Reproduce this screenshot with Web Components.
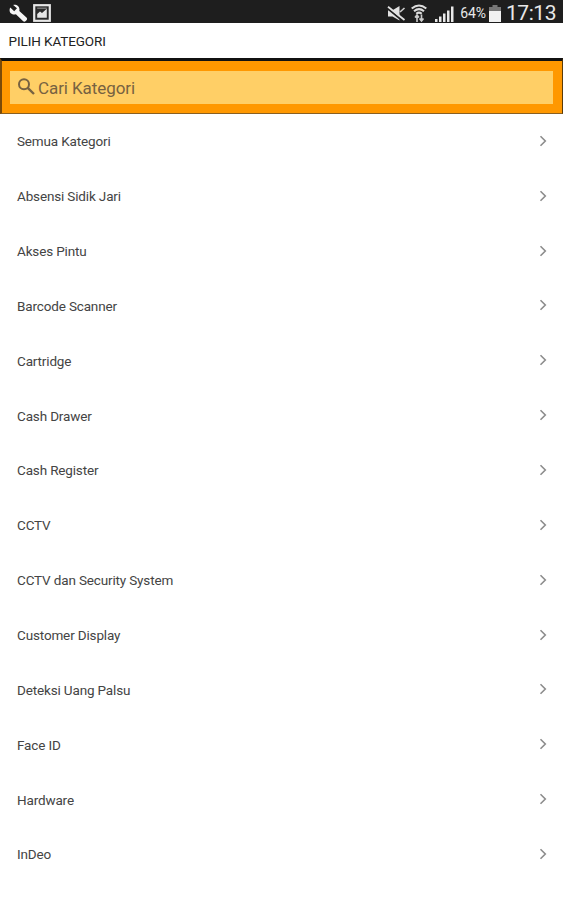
<!DOCTYPE html>
<html lang="id">
<head>
<meta charset="utf-8">
<title>Pilih Kategori</title>
<style>
  body {
    margin: 0;
    background: #fff;
    font-family: Roboto, "Liberation Sans", sans-serif;
  }
</style>
</head>
<body>
<category-page>
  <status-bar slot="status" battery="64%" time="17:13"></status-bar>
  <page-title slot="title">PILIH KATEGORI</page-title>
  <search-box slot="search">Cari Kategori</search-box>
  <category-row>Semua Kategori</category-row>
  <category-row>Absensi Sidik Jari</category-row>
  <category-row>Akses Pintu</category-row>
  <category-row>Barcode Scanner</category-row>
  <category-row>Cartridge</category-row>
  <category-row>Cash Drawer</category-row>
  <category-row>Cash Register</category-row>
  <category-row>CCTV</category-row>
  <category-row>CCTV dan Security System</category-row>
  <category-row>Customer Display</category-row>
  <category-row>Deteksi Uang Palsu</category-row>
  <category-row>Face ID</category-row>
  <category-row>Hardware</category-row>
  <category-row>InDeo</category-row>
</category-page>

<script>
/**
 * Page frame: status bar, title and search on top, category rows below
 */
class CategoryPage extends HTMLElement {
  constructor() {
    super();
    this.attachShadow({ mode: 'open' });
    this.shadowRoot.innerHTML = `
      <style>
        :host {
          display: flex;
          flex-direction: column;
          height: 900px;
          overflow: hidden;
        }

        .list {
          display: flex;
          flex-direction: column;
        }
      </style>
      <slot name="status"></slot>
      <slot name="title"></slot>
      <slot name="search"></slot>
      <div class="list"><slot></slot></div>
    `;
  }
}

/**
 * Android status bar with notification icons, battery level and clock
 */
class StatusBar extends HTMLElement {
  constructor() {
    super();
    this.attachShadow({ mode: 'open' });
  }

  connectedCallback() {
    this.shadowRoot.innerHTML = `
      <style>
        :host {
          display: flex;
          justify-content: space-between;
          box-sizing: border-box;
          flex: none;
          height: 23px;
          padding: 0 7px 0 9px;
          background: #1e1e1e;
          color: #e8e8e8;
        }

        .group {
          display: flex;
          align-items: center;
          height: 26px;
        }

        svg {
          display: block;
          flex: none;
        }

        .battery {
          font-size: 14px;
          letter-spacing: -0.1px;
          margin: 0 3px 0 6px;
        }

        .time {
          font-size: 21px;
          letter-spacing: -0.45px;
          margin-left: 5px;
        }
      </style>

      <div class="group">
        <svg width="19" height="18" viewBox="0 0 19 18">
          <path d="M4.200 1 8 4.300 5.200 7.200 1.300 3.600C-.4 6.600 1 9.800 4 10.400c1 .2 2 .1 2.900-.2l7 6.800c.9.900 2 .9 2.800 0l.8-.8c.8-.8.8-1.900 0-2.700L10.300 6.900C11.200 3 8 .2 4.200 1Z" fill="#f6f6f6"/>
        </svg>
        <svg width="18" height="18" viewBox="0 0 18 18" style="margin-left:5px">
          <rect x="1.200" y="1.200" width="15.600" height="15.600" fill="#2a2a2a" stroke="#e6e6e6" stroke-width="2.200"/>
          <path d="M4.200 13.800V10l2.800-2.500 2 1.500 4.800-4.300v9.100Z" fill="#e6e6e6"/>
          <path d="M4.200 4.200h9.600" stroke="#8a8a8a" stroke-width="1.200"/>
        </svg>
      </div>

      <div class="group">
        <svg width="19" height="17" viewBox="0 0 19 17">
          <path d="M1 5.300h4.500L12.500 1v14.500L5.500 11.500H1Z" fill="#e2e2e2"/>
          <path d="M1 3.700 16.500 16.500" stroke="#1e1e1e" stroke-width="2"/>
          <path d="M1 1.800 17.500 15" stroke="#e2e2e2" stroke-width="1.800"/>
          <path d="M13 7 17.500 3" stroke="#ccc" stroke-width="1.600"/>
        </svg>
        <svg width="16" height="18" viewBox="0 0 16 18" style="margin-left:5px">
          <g fill="none" stroke="#ddd" stroke-width="2.100">
            <path d="M.7 4.500Q8-1.500 15.300 4.500"/>
            <path d="M3 7.300Q8 3 13 7.300"/>
            <path d="M5.300 9.800Q8 7.600 10.700 9.800"/>
          </g>
          <path d="M6 18v-7M4 13.500 6 11l2 2.500M10.500 10.500v6.500M8.500 14.500l2 2.500 2-2.500" fill="none" stroke="#ccc" stroke-width="1.600"/>
        </svg>
        <svg width="19" height="17" viewBox="0 0 19 17" style="margin-left:8px">
          <path d="M0 14h2.500v3H0ZM4 11.500h2.500V17H4ZM8 8.500h2.500V17H8ZM12 5.500h2.500V17H12ZM16 1.500h2.500V17H16Z" fill="#e8e8e8"/>
        </svg>
        <span class="battery"></span>
        <svg width="12" height="17" viewBox="0 0 12 17">
          <path d="M3.500 0h5v2H12v5H0V2h3.500Z" fill="#777"/>
          <path d="M0 6h12v11H0Z" fill="#f2f2f2"/>
        </svg>
        <span class="time"></span>
      </div>
    `;
    this.shadowRoot.querySelector('.battery').textContent = this.getAttribute('battery');
    this.shadowRoot.querySelector('.time').textContent = this.getAttribute('time');
  }
}

class PageTitle extends HTMLElement {
  constructor() {
    super();
    this.attachShadow({ mode: 'open' });
    this.shadowRoot.innerHTML = `
      <style>
        :host {
          display: flex;
          align-items: center;
          box-sizing: border-box;
          flex: none;
          height: 35px;
          padding: 1px 9px 0 8.500px;
          color: #222;
          font-size: 13.500px;
          letter-spacing: -0.1px;
        }
      </style>
      <span><slot></slot></span>
    `;
  }
}

class SearchBox extends HTMLElement {
  constructor() {
    super();
    this.attachShadow({ mode: 'open' });
    this.shadowRoot.innerHTML = `
      <style>
        :host {
          display: block;
          box-sizing: border-box;
          flex: none;
          height: 56px;
          border: solid;
          border-width: 3px 1px 1px 2px;
          border-color: #111 #5a3a08 #8a6020 #7a4a08;
          background: #ff9800;
          padding: 10px 9px 9px 8px;
        }

        .field {
          display: flex;
          align-items: center;
          gap: 3px;
          box-sizing: border-box;
          height: 33px;
          padding-left: 8px;
          background: #ffcf66;
          color: #776241;
          font-size: 17px;
          letter-spacing: -0.08px;
        }

        svg {
          display: block;
          flex: none;
          margin-bottom: 2px;
        }
      </style>
      <div class="field">
        <svg width="17" height="17" viewBox="0 0 17 17">
          <circle cx="6" cy="6.200" r="5" fill="none" stroke="currentColor" stroke-width="2"/>
          <path d="M9.700 9.900 16 16" stroke="currentColor" stroke-width="2.400"/>
        </svg>
        <span><slot></slot></span>
      </div>
    `;
  }
}

class CategoryRow extends HTMLElement {
  constructor() {
    super();
    this.attachShadow({ mode: 'open' });
    this.shadowRoot.innerHTML = `
      <style>
        :host {
          display: flex;
          align-items: center;
          justify-content: space-between;
          box-sizing: border-box;
          flex: none;
          height: 54.85px;
          padding: 0 16px 0 17px;
          color: #444;
          font-size: 13.500px;
          letter-spacing: -0.15px;
        }

        svg {
          display: block;
          margin-bottom: 1px;
        }
      </style>
      <span><slot></slot></span>
      <svg width="8" height="12" viewBox="0 0 8 12">
        <path d="M1.500 1.300 6.300 6 1.500 10.700" fill="none" stroke="#8c8c8c" stroke-width="1.600"/>
      </svg>
    `;
  }
}

customElements.define('category-page', CategoryPage);
customElements.define('status-bar', StatusBar);
customElements.define('page-title', PageTitle);
customElements.define('search-box', SearchBox);
customElements.define('category-row', CategoryRow);
</script>
</body>
</html>
